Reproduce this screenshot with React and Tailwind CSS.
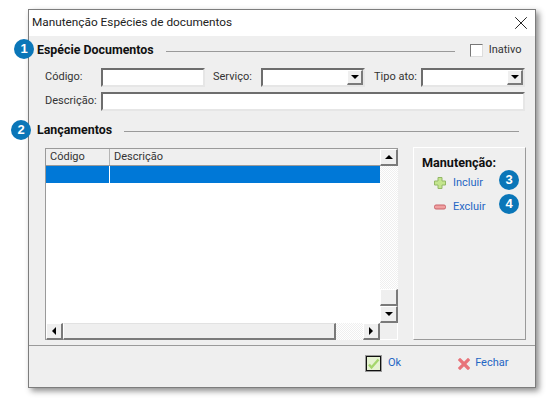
import { X } from "lucide-react";

const font = "font-['Roboto','Noto_Sans',sans-serif]";

function Badge({ n, className }) {
  return (
    <div className={`absolute w-5 h-5 rounded-full bg-[#0a76b8] text-white text-[13px] font-bold flex items-center justify-center font-['Liberation_Sans',sans-serif] ${className}`}>
      {n}
    </div>
  );
}

function Arrow({ dir }) {
  const paths = {
    up: "M0 5 L4 1 L8 5 Z",
    down: "M0 1 L8 1 L4 5 Z",
    left: "M5 0 L5 8 L1 4 Z",
    right: "M1 0 L1 8 L5 4 Z",
  };
  const size = dir === "up" || dir === "down" ? "w-2 h-1.5" : "w-1.5 h-2";
  const box = dir === "up" || dir === "down" ? "0 0 8 6" : "0 0 6 8";
  return (
    <svg className={size} viewBox={box}>
      <path d={paths[dir]} fill="#000" />
    </svg>
  );
}

function ScrollButton({ dir, className = "" }) {
  return (
    <div className={`flex items-center justify-center bg-[#efefef] border border-t-white border-l-white border-r-[#7a7a7a] border-b-[#7a7a7a] border-r-2 border-b-2 ${className}`}>
      <Arrow dir={dir} />
    </div>
  );
}

function Sunken({ className = "", children }) {
  return (
    <div className={`h-[19px] bg-white border-2 border-t-[#6d6d6d] border-l-[#6d6d6d] border-r-[#e6e6e6] border-b-[#e6e6e6] flex justify-end ${className}`}>
      {children}
    </div>
  );
}

function Select({ className }) {
  return (
    <Sunken className={className}>
      <ScrollButton dir="down" className="w-4 h-full" />
    </Sunken>
  );
}

function SectionTitle({ title, lineClass }) {
  return (
    <div className="flex items-center">
      <span className="text-[12.4px] font-bold text-[#111] leading-4 whitespace-nowrap">{title}</span>
      <div className={`h-px bg-[#9a9a9a] mt-0.5 ${lineClass}`} />
    </div>
  );
}

function PlusIcon() {
  return (
    <svg className="w-3 h-3" viewBox="0 0 12 12">
      <path d="M4 0.5h4v3.5h3.5v4H8v3.5H4V8H0.5V4H4z" fill="#c4e58e" stroke="#93b866" strokeWidth="1" />
    </svg>
  );
}

function MinusIcon() {
  return (
    <svg className="w-3 h-3" viewBox="0 0 12 12">
      <rect x="0.5" y="4" width="11" height="4" rx="1.5" fill="#f0a0a0" stroke="#c9636b" strokeWidth="1" />
    </svg>
  );
}

function OkIcon() {
  return (
    <svg className="w-[17px] h-[17px]" viewBox="0 0 17 17">
      <rect x="0.5" y="0.5" width="16" height="16" fill="#fff" stroke="#9a9a9a" />
      <rect x="1.5" y="1.5" width="14" height="14" fill="#e6f2d2" stroke="#111" />
      <path d="M4 9.5l2.5 3L13.5 4.5" fill="none" stroke="#a5d66c" strokeWidth="2.4" />
    </svg>
  );
}

function CloseIcon() {
  return (
    <svg className="w-3 h-3" viewBox="0 0 12 12">
      <path d="M2 2l8 8M10 2l-8 8" stroke="#e8747a" strokeWidth="3.2" strokeLinecap="square" />
    </svg>
  );
}

export default function App() {
  return (
    <div className={`relative w-[549px] h-[401px] bg-white overflow-hidden pt-[9px] pl-[28px] ${font}`}>
      {/* Window */}
      <div className="w-[508px] h-[379px] border border-[#7d7d7d] bg-[#efefef] shadow-[3px_3px_6px_rgba(0,0,0,0.45)] flex flex-col text-[11px] text-[#333] whitespace-nowrap">
        {/* Title bar */}
        <div className="h-[26px] bg-white flex items-center justify-between pl-[3px] pr-[3px] shrink-0">
          <span className="text-[11.8px] text-[#222]">Manutenção Espécies de documentos</span>
          <X className="w-[22px] h-[22px] text-[#111]" strokeWidth={1} />
        </div>

        <div className="flex-1 flex flex-col pl-[8px] pr-[9px]">
          {/* Espécie Documentos */}
          <div className="flex items-center pt-[1px] h-[27px]">
            <SectionTitle title="Espécie Documentos" lineClass="w-[289px] ml-3" />
            <div className="w-[13px] h-[13px] ml-[15px] bg-white border border-t-[#777] border-l-[#777] border-r-[#ddd] border-b-[#ddd]" />
            <span className="ml-[6px]">Inativo</span>
          </div>

          <div className="flex items-center mt-[5px] pl-[8px]">
            <span className="w-[56px]">Código:</span>
            <Sunken className="w-[104px]" />
            <span className="ml-2 w-[48px]">Serviço:</span>
            <Select className="w-[104px]" />
            <span className="ml-[9px] w-[47px]">Tipo ato:</span>
            <Select className="w-[104px]" />
          </div>
          <div className="flex items-center mt-[5px] pl-[8px]">
            <span className="w-[56px]">Descrição:</span>
            <Sunken className="w-[424px]" />
          </div>

          {/* Lançamentos */}
          <div className="mt-[11px] h-4 flex items-center">
            <SectionTitle title="Lançamentos" lineClass="w-[395px] ml-3" />
          </div>

          <div className="flex mt-[10px] pl-[8px]">
            {/* Grid */}
            <div className="w-[353px] h-[192px] border-l border-t border-[#9a9a9a] bg-white grid grid-cols-[1fr_18px] grid-rows-[1fr_17px]">
              <div className="flex flex-col min-w-0">
                <div className="h-[17px] flex bg-[#efefef] border-b border-[#9a9a9a] leading-4">
                  <span className="w-[64px] pl-1 border-r border-[#b5b5b5]">Código</span>
                  <span className="pl-1">Descrição</span>
                </div>
                <div className="h-[17px] flex bg-[#0078d7]">
                  <div className="w-[64px] border-r border-white" />
                </div>
              </div>
              <div className="flex flex-col bg-[repeating-conic-gradient(#efefef_0_25%,#fff_0_50%)] bg-[length:2px_2px]">
                <ScrollButton dir="up" className="h-[17px]" />
                <div className="flex-1" />
                <div className="h-[17px] bg-[#efefef] border-t border-t-white border-l border-l-white border-r-2 border-r-[#7a7a7a] border-b-2 border-b-[#7a7a7a]" />
                <ScrollButton dir="down" className="h-[17px]" />
              </div>
              <div className="flex bg-[repeating-conic-gradient(#efefef_0_25%,#fff_0_50%)] bg-[length:2px_2px]">
                <ScrollButton dir="left" className="w-[17px]" />
                <div className="w-[273px] bg-[#efefef] border-t border-t-[#e2e2e2] border-l border-l-white border-r-2 border-r-[#7a7a7a] border-b-2 border-b-[#7a7a7a]" />
                <div className="flex-1" />
                <ScrollButton dir="right" className="w-[17px]" />
              </div>
              <div className="bg-[#efefef] border-r border-b border-white" />
            </div>

            {/* Manutenção */}
            <div className="ml-[15px] w-[113px] h-[193px] -mt-px border border-t-white border-l-white border-r-[#9a9a9a] border-b-[#9a9a9a] pt-[7px] pl-2">
              <div className="font-bold text-[12.6px] text-[#111] leading-4">Manutenção:</div>
              <div className="flex items-center gap-[7px] pl-3 mt-[4px] h-4 text-[#1f66c4]">
                <PlusIcon />
                <span>Incluir</span>
              </div>
              <div className="flex items-center gap-[7px] pl-3 mt-2 h-4 text-[#1f66c4]">
                <MinusIcon />
                <span>Excluir</span>
              </div>
            </div>
          </div>

          <div className="h-px bg-[#9a9a9a] mt-[5px] -ml-[8px] -mr-[9px]" />

          {/* Footer */}
          <div className="flex items-center h-[41px] pb-[6px] pl-[328px] text-[#1f66c4]">
            <OkIcon />
            <span className="ml-[6px]">Ok</span>
            <div className="ml-[57px]"><CloseIcon /></div>
            <span className="ml-[5px]">Fechar</span>
          </div>
        </div>
      </div>

      <Badge n="1" className="left-[14px] top-[39px]" />
      <Badge n="2" className="left-[11px] top-[120px]" />
      <Badge n="3" className="left-[499px] top-[170px]" />
      <Badge n="4" className="left-[499px] top-[194px]" />
    </div>
  );
}
